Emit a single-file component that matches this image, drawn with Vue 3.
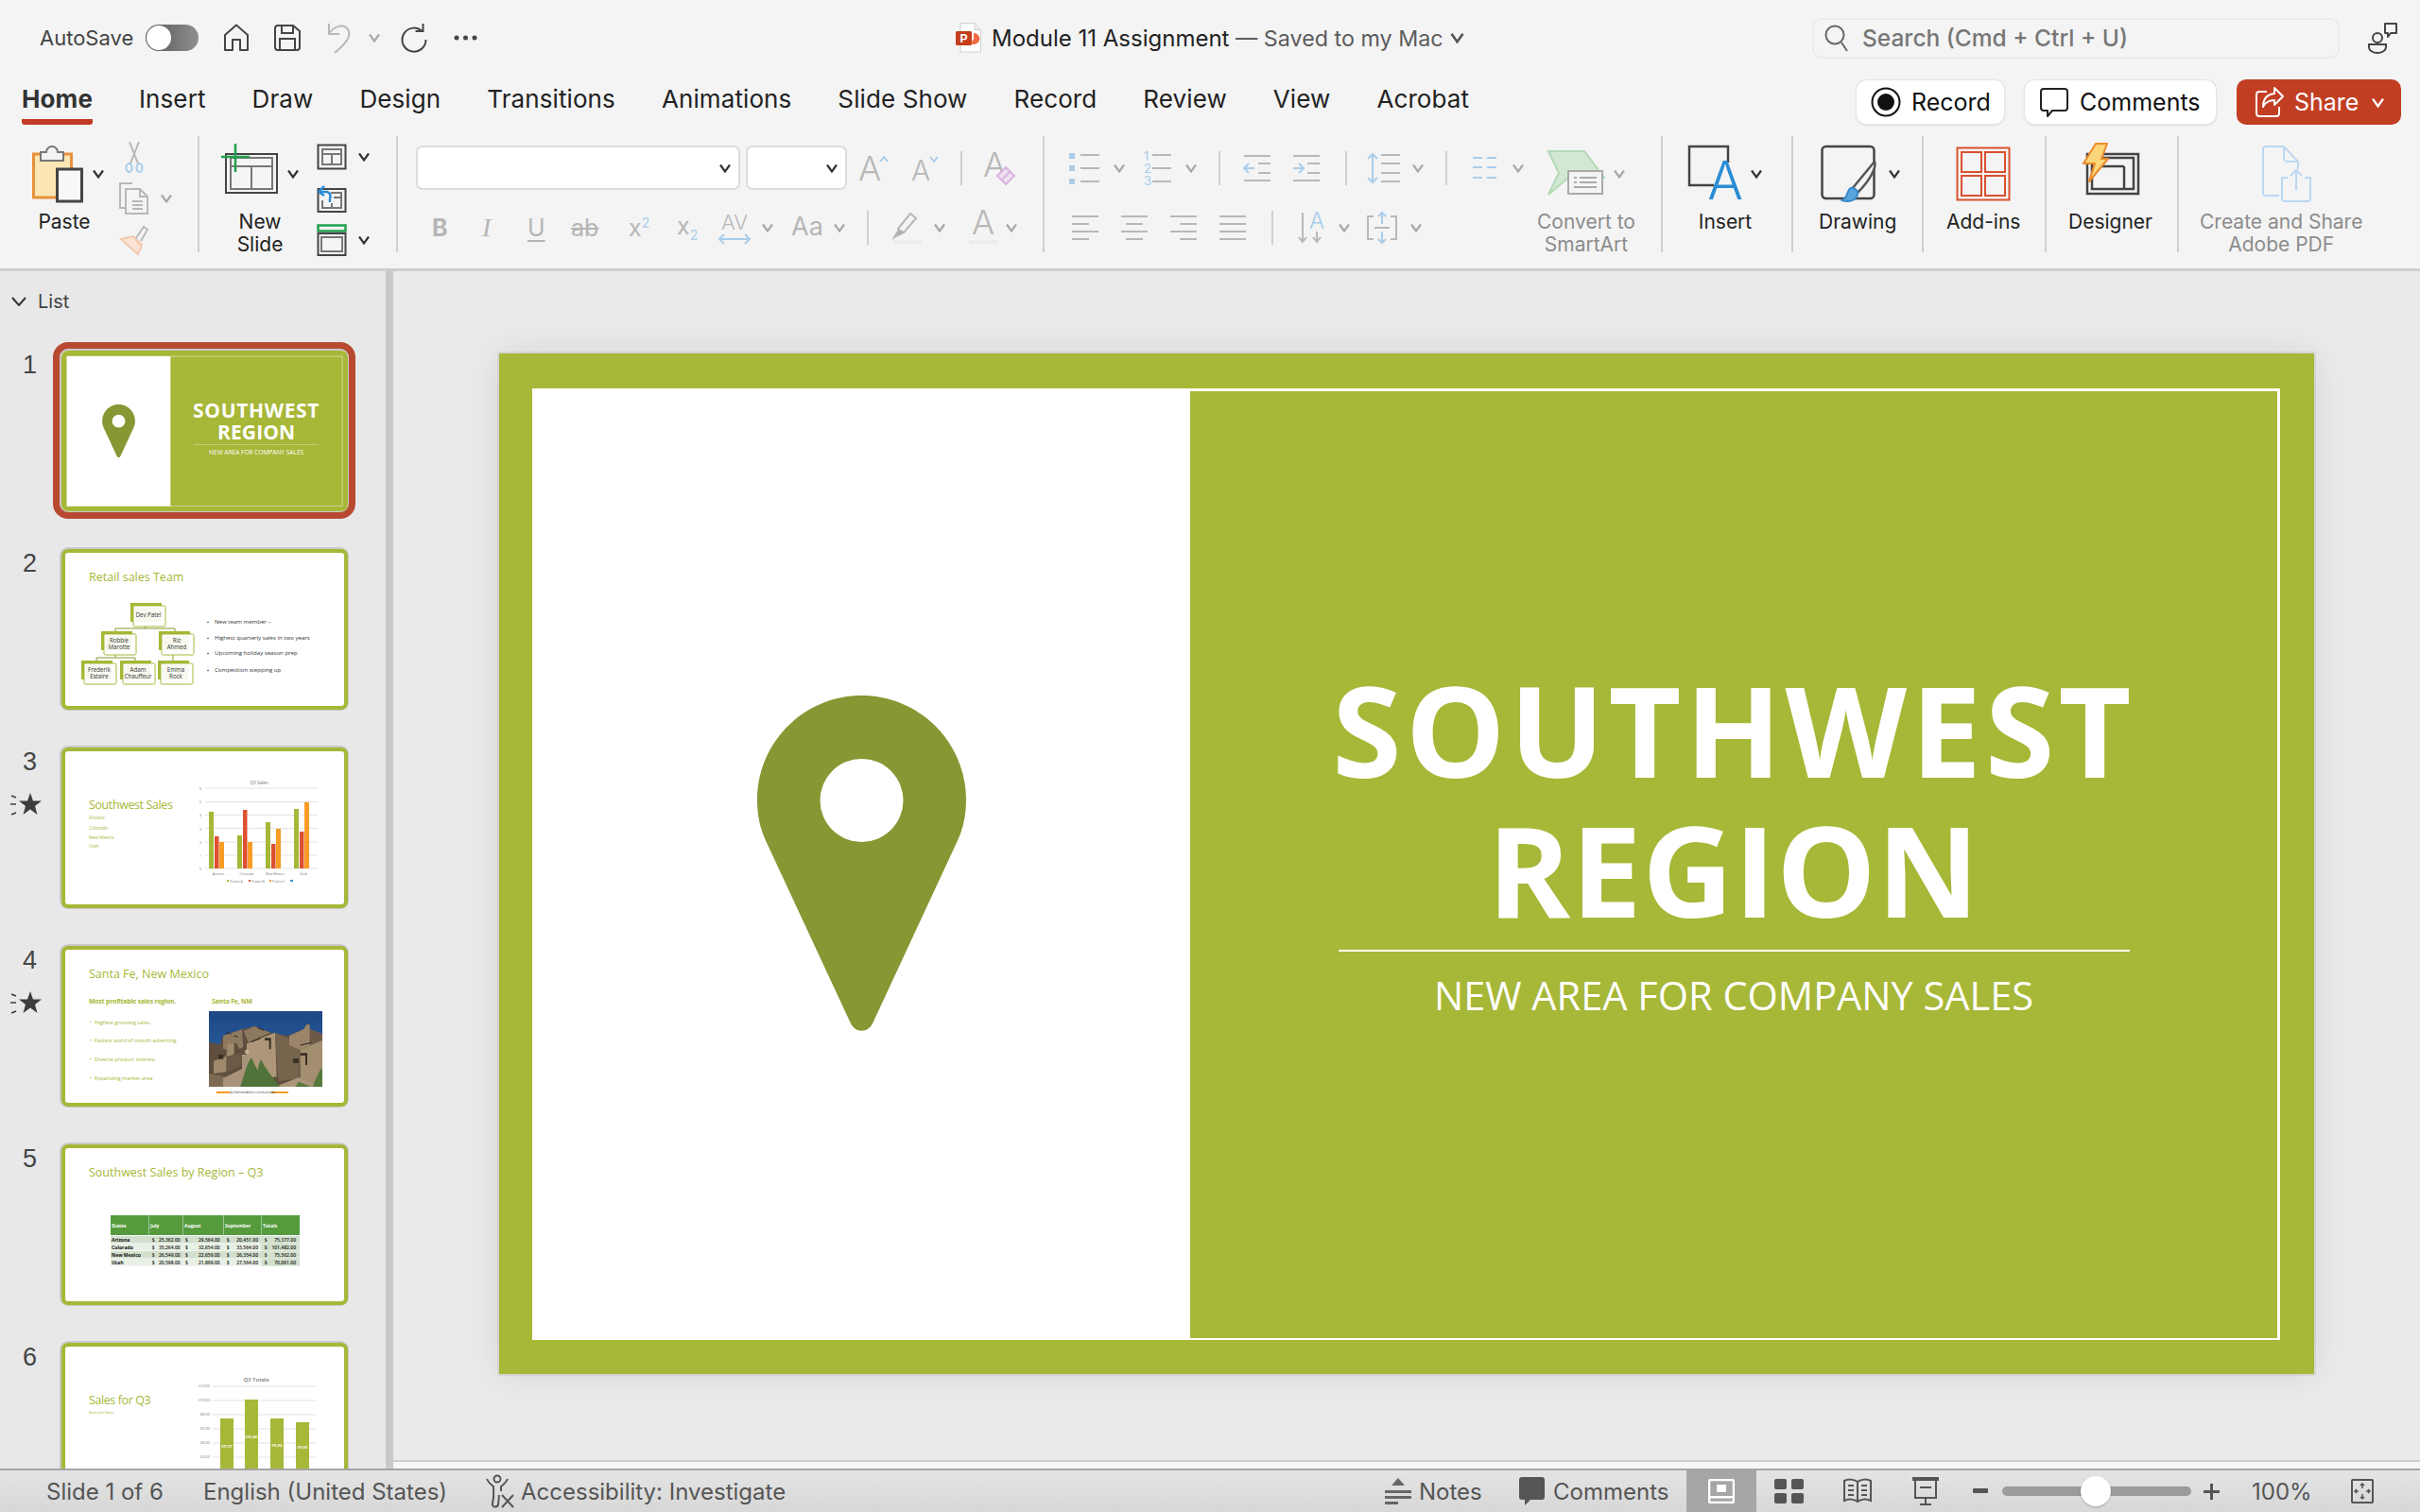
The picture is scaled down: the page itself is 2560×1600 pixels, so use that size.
<template>
  <div class="app">
    <!-- shared little chevron -->
    <svg width="0" height="0" class="defs">
      <symbol id="caret" viewBox="0 0 12 10"><path d="M1 1.5 6 8.5 11 1.5" fill="none" stroke="currentColor" stroke-width="2.2" /></symbol>
    </svg>

    <header class="titlebar">
      <div class="tb-left">
        <span class="autosave">AutoSave</span>
        <span class="toggle"><i></i></span>
        <svg class="ic home" width="28" height="30" viewBox="0 0 28 30"><path d="M2 28V12L14 1.500 26 12V28h-8V17h-8v11z" stroke-linejoin="round" /></svg>
        <svg class="ic save" width="28" height="28" viewBox="0 0 28 28"><path d="M4 1h16l7 6v17a3 3 0 0 1-3 3H4a3 3 0 0 1-3-3V4a3 3 0 0 1 3-3z" /><path d="M8 1v8h12V1M6 27V15h16v12" /></svg>
        <svg class="ic off undo" width="27" height="34" viewBox="0 0 27 34"><path d="M3 2v11h11M3 13C8 4 19 2 23 8c4 7-1 14-14 25" /></svg>
        <svg class="caret off c-undo"><use href="#caret" /></svg>
        <svg class="ic redo" width="28" height="30" viewBox="0 0 28 30"><path d="M22 7.500A12.500 12.500 0 1 0 26.500 17M23.500 0v8h-8" /></svg>
        <svg class="dots" width="25" height="6" viewBox="0 0 25 6"><circle cx="3" cy="3" r="2.500" /><circle cx="12.500" cy="3" r="2.500" /><circle cx="22" cy="3" r="2.500" /></svg>
      </div>
      <div class="tb-title">
        <svg class="ppt" width="27" height="32" viewBox="0 0 27 32">
          <path d="M5 .5h15l6.500 7V31H5z" fill="#fff" stroke="#cfcfcf" />
          <path d="M20 .5v7h6.500" fill="#eee" stroke="#cfcfcf" />
          <rect x="0" y="9" width="17" height="15" rx="1.500" fill="#c43e1c" />
          <text x="8.500" y="21" class="ppt-p">P</text>
          <path d="M19 11a6 6 0 1 1-3 11l3-5z" fill="#ee6a42" />
        </svg>
        <span class="doc">Module 11 Assignment</span>
        <span class="saved"> — Saved to my Mac</span>
        <svg class="caret c-title"><use href="#caret" /></svg>
      </div>
      <div class="search">
        <svg class="ic s-666" width="26" height="30" viewBox="0 0 26 30"><circle cx="11" cy="12" r="9.500" /><path d="M18 20l6 9" /></svg>
        <span>Search (Cmd + Ctrl + U)</span>
      </div>
      <svg class="ic people" width="32" height="34" viewBox="0 0 32 34">
        <circle cx="10" cy="17" r="5" /><path d="M1 24h18v3a9 6 0 0 1-18 0z" />
        <path d="M18 2h12v10h-6l-3 4v-4h-3z" stroke-linejoin="round" />
      </svg>
    </header>

    <nav class="tabbar">
      <div v-for="t in tabs" :key="t" class="tab" :class="{ active: t === 'Home' }">{{ t }}</div>
      <div class="actions">
        <button class="btn">
          <svg width="32" height="32" viewBox="0 0 32 32"><circle cx="16" cy="16" r="14.500" fill="none" stroke="#111" stroke-width="2" /><circle cx="16" cy="16" r="9" fill="#111" /></svg>
          Record
        </button>
        <button class="btn btn-c">
          <svg class="ic s-dark" width="32" height="32" viewBox="0 0 32 32"><path d="M5 2h22a3 3 0 0 1 3 3v17a3 3 0 0 1-3 3H14l-5 6v-6H5a3 3 0 0 1-3-3V5a3 3 0 0 1 3-3z" stroke-linejoin="round" /></svg>
          Comments
        </button>
        <button class="share">
          <svg class="ic s-white" width="30" height="32" viewBox="0 0 30 32"><path d="M12 5H4a3 3 0 0 0-3 3v20a3 3 0 0 0 3 3h18a3 3 0 0 0 3-3v-7" /><path d="M20 1l9 9-9 9v-5c-7 0-10 3-12 7 0-8 4-13 12-14z" stroke-linejoin="round" /></svg>
          Share
          <svg class="caret c-share"><use href="#caret" /></svg>
        </button>
      </div>
    </nav>

    <section class="ribbon">
      <div class="grp g-paste">
        <div class="big">
          <div class="big-ic">
            <svg class="ic" width="54" height="64" viewBox="0 0 54 64">
              <rect x="1.500" y="11" width="40" height="46" fill="#fbe6b4" stroke="#e8913a" stroke-width="3" />
              <path d="M9 18V9h6a6 6 0 0 1 12 0h6v9z" fill="#f4f4f4" stroke="#777" />
              <rect x="26.500" y="27" width="26" height="34" fill="#f8f8f8" stroke="#444" stroke-width="3" />
            </svg>
            <svg class="caret"><use href="#caret" /></svg>
          </div>
          <div class="lbl l-paste">Paste</div>
        </div>
        <div class="smalls">
          <div class="sm">
            <svg class="ic off" width="32" height="34" viewBox="0 0 32 34"><path d="M11 1l9 23M21 1l-9 23" /><g stroke="#a9cdea"><ellipse cx="10.500" cy="28.500" rx="3" ry="4.500" /><ellipse cx="21.500" cy="28.500" rx="3" ry="4.500" /></g></svg>
          </div>
          <div class="sm">
            <svg class="ic off" width="32" height="34" viewBox="0 0 32 34"><path d="M14 1H1v26h6M7 7h15l8 8v18H7zM22 7v8h8M14 20h11M14 24h11M14 28h11" /></svg>
            <svg class="caret off"><use href="#caret" /></svg>
          </div>
          <div class="sm">
            <svg class="ic s-peach" width="32" height="34" viewBox="0 0 32 34"><path d="M2 16l13-3 9 9-4 10zM15 13l7 9" fill="#fae3d4" /><path d="M18 15l8-12 4 3-7 12" stroke="#bbb" /></svg>
          </div>
        </div>
      </div>

      <div class="grp g-slides">
        <div class="big">
          <div class="big-ic">
            <svg class="ic" width="60" height="64" viewBox="0 0 60 64">
              <rect x="5" y="11" width="54" height="41" />
              <path d="M10 15h44v33H10zM10 24h44M32 24v24" stroke="#777" />
              <path d="M15 0v30M0 14h30" stroke="#22a04e" stroke-width="2.500" />
            </svg>
            <svg class="caret"><use href="#caret" /></svg>
          </div>
          <div class="lbl">New<br />Slide</div>
        </div>
        <div class="smalls s2">
          <div class="sm">
            <svg class="ic" width="32" height="28" viewBox="0 0 32 28"><rect x="1.500" y="1.500" width="29" height="25" /><path d="M6 6h20v16H6zM6 11h20M16 11v11" stroke="#777" /></svg>
            <svg class="caret"><use href="#caret" /></svg>
          </div>
          <div class="sm">
            <svg class="ic" width="32" height="30" viewBox="0 0 32 30"><rect x="1.500" y="5" width="29" height="24" /><path d="M15 9h11v16H6v-8M18 14h8M16 20v5" stroke="#777" /><path d="M2 8l6-6M2 8l6 4M3 8h8a5 5 0 0 1 3 7v4" stroke="#2a8dd4" stroke-width="2.500" /></svg>
          </div>
          <div class="sm">
            <svg class="ic" width="32" height="34" viewBox="0 0 32 34"><rect x="1.500" y="1.500" width="29" height="6" stroke="#22a04e" stroke-width="2.500" /><rect x="1.500" y="10" width="29" height="23" /><rect x="5" y="14" width="22" height="15" stroke="#777" /></svg>
            <svg class="caret"><use href="#caret" /></svg>
          </div>
        </div>
      </div>

      <div class="grp g-font">
        <div class="rows">
          <div class="row r-font1">
            <div class="field f-name"><svg class="caret"><use href="#caret" /></svg></div>
            <div class="field f-size"><svg class="caret"><use href="#caret" /></svg></div>
            <svg class="ic off" width="32" height="30" viewBox="0 0 32 30"><text x="11" y="28" class="gl-a">A</text><path d="M22 8l4-5 4 5" stroke="#a9cdea" /></svg>
            <svg class="ic off" width="30" height="30" viewBox="0 0 30 30"><text x="9" y="28" class="gl-a2">A</text><path d="M19 3l4 5 4-5" stroke="#a9cdea" /></svg>
            <i class="vsep"></i>
            <svg class="ic s-pink" width="34" height="38" viewBox="0 0 34 38"><text x="10" y="28" class="gl-a">A</text><path d="M13 27l9-9 9 9-9 9z" fill="#efdff1" /><path d="M17.500 31.500l9-9" /></svg>
          </div>
          <div class="row r-font2">
            <span class="gl g-b">B</span>
            <span class="gl g-i">I</span>
            <span class="gl g-u">U</span>
            <span class="gl g-s">ab</span>
            <span class="gl g-x">x<sup>2</sup></span>
            <span class="gl g-x">x<sub>2</sub></span>
            <svg class="ic s-blue" width="34" height="36" viewBox="0 0 34 36"><text x="17" y="20" class="gl-av">AV</text><path d="M1 30h32M6 25l-5 5 5 5M28 25l5 5-5 5" /></svg>
            <svg class="caret off"><use href="#caret" /></svg>
            <span class="gl g-aa">Aa</span>
            <svg class="caret off"><use href="#caret" /></svg>
            <i class="vsep tall"></i>
            <svg class="ic off" width="30" height="34" viewBox="0 0 30 34"><path d="M5 18L18 2l6 5L11 22l-5 1z" /><path d="M1 27l5-8 5 3z" fill="#aaa" /><path d="M0 32h30" stroke="#ececec" stroke-width="4" /></svg>
            <svg class="caret off"><use href="#caret" /></svg>
            <svg class="ic off" width="30" height="34" viewBox="0 0 30 34"><text x="15" y="24" class="gl-a">A</text><path d="M0 32h30" stroke="#ececec" stroke-width="4" /></svg>
            <svg class="caret off"><use href="#caret" /></svg>
          </div>
        </div>
      </div>

      <div class="grp g-para">
        <div class="rows para-rows">
          <div class="row r-para1">
            <svg class="ic off" width="32" height="32" viewBox="0 0 32 32"><path d="M12 2h20M12 16h20M12 30h20" /><path d="M0 0h6v6H0zM0 13h6v6H0zM0 27h6v6H0z" fill="#a9cdea" stroke="none" /></svg>
            <svg class="caret off"><use href="#caret" /></svg>
            <svg class="ic off" width="32" height="36" viewBox="0 0 32 36"><text x="3" y="10" class="gl-n">1</text><text x="3" y="23" class="gl-n">2</text><text x="3" y="36" class="gl-n">3</text><path d="M12 4h20M12 18h20M12 32h20" /></svg>
            <svg class="caret off"><use href="#caret" /></svg>
            <i class="vsep"></i>
            <svg class="ic off" width="30" height="30" viewBox="0 0 30 30"><path d="M1 2h28M16 10h13M16 20h13M1 28h28" /><path d="M12 15H2M6 10l-5 5 5 5" stroke="#a9cdea" /></svg>
            <svg class="ic off" width="30" height="30" viewBox="0 0 30 30"><path d="M1 2h28M16 10h13M16 20h13M1 28h28" /><path d="M1 15h10M7 10l5 5-5 5" stroke="#a9cdea" /></svg>
            <i class="vsep"></i>
            <svg class="ic off" width="34" height="34" viewBox="0 0 34 34"><path d="M14 3h20M14 12h20M14 22h20M14 31h20" /><path d="M5 2v30M0 7l5-5 5 5M0 27l5 5 5-5" stroke="#a9cdea" /></svg>
            <svg class="caret off"><use href="#caret" /></svg>
            <i class="vsep"></i>
            <svg class="ic s-blue" width="26" height="26" viewBox="0 0 26 26"><path d="M0 2h10M0 12h10M0 23h10M15 2h10M15 12h10M15 23h10" /></svg>
            <svg class="caret off"><use href="#caret" /></svg>
          </div>
          <div class="row r-para2">
            <svg class="ic off" width="28" height="28" viewBox="0 0 28 28"><path d="M0 2h28M0 10h18M0 18h28M0 26h18" /></svg>
            <svg class="ic off" width="28" height="28" viewBox="0 0 28 28"><path d="M0 2h28M5 10h18M0 18h28M5 26h18" /></svg>
            <svg class="ic off" width="28" height="28" viewBox="0 0 28 28"><path d="M0 2h28M10 10h18M0 18h28M10 26h18" /></svg>
            <svg class="ic off" width="28" height="28" viewBox="0 0 28 28"><path d="M0 2h28M0 10h28M0 18h28M0 26h28" /></svg>
            <i class="vsep tall"></i>
            <svg class="ic off" width="28" height="34" viewBox="0 0 28 34"><text x="20" y="18" class="gl-dir">A</text><path d="M5 1v31M1 27l4 5 4-5M20 21v11M16 27l4 5 4-5" /></svg>
            <svg class="caret off"><use href="#caret" /></svg>
            <svg class="ic off" width="32" height="34" viewBox="0 0 32 34"><path d="M7 5H1v24h6M25 5h6v24h-6M8 17h16" /><path d="M16 1v12M12 5l4-4 4 4M16 21v12M12 29l4 4 4-4" stroke="#a9cdea" /></svg>
            <svg class="caret off"><use href="#caret" /></svg>
          </div>
        </div>
        <div class="big">
          <div class="big-ic">
            <svg class="ic" width="60" height="64" viewBox="0 0 60 64">
              <path d="M1 8h38l21 28H22l-21 18 11-23z" fill="#d3e8d4" stroke="#b3d9b7" />
              <rect x="22" y="29" width="36" height="24" fill="#f4f4f4" stroke="#aaa" />
              <path d="M28 36h3M34 36h18M28 41h3M34 41h18M28 46h24" stroke="#aaa" />
            </svg>
            <svg class="caret off"><use href="#caret" /></svg>
          </div>
          <div class="lbl dim">Convert to<br />SmartArt</div>
        </div>
      </div>

      <div class="grp g-insert">
        <div class="big">
          <div class="big-ic">
            <svg class="ic" width="56" height="64" viewBox="0 0 56 64">
              <path d="M42 20V3H1v41h26" stroke-width="2.500" />
              <text x="39" y="59" class="gl-big">A</text>
            </svg>
            <svg class="caret"><use href="#caret" /></svg>
          </div>
          <div class="lbl">Insert</div>
        </div>
      </div>

      <div class="grp g-draw">
        <div class="big">
          <div class="big-ic">
            <svg class="ic" width="62" height="64" viewBox="0 0 62 64">
              <rect x="1.500" y="3" width="55" height="55" rx="4" stroke-width="2.500" />
              <path d="M33 48l24-29c2 4-2 17-18 33z" fill="#f4f4f4" stroke="#555" stroke-width="2.500" />
              <path d="M23 60c6 2 14 1 16-6 1-4-3-8-7-7-4 1-3 10-9 13z" fill="#58a4dc" stroke="#3b8ac8" />
            </svg>
            <svg class="caret"><use href="#caret" /></svg>
          </div>
          <div class="lbl l-draw">Drawing</div>
        </div>
      </div>

      <div class="grp g-addin">
        <div class="big">
          <div class="big-ic">
            <svg class="ic s-red" width="58" height="58" viewBox="0 0 58 58">
              <rect x="1.500" y="1.500" width="55" height="55" />
              <path d="M6 6h21v21H6zM31 6h21v21H31zM6 31h21v21H6zM31 31h21v21H31z" />
            </svg>
          </div>
          <div class="lbl">Add-ins</div>
        </div>
      </div>

      <div class="grp g-design">
        <div class="big">
          <div class="big-ic">
            <svg class="ic" width="60" height="64" viewBox="0 0 60 64">
              <rect x="5" y="11" width="54" height="42" stroke-width="2.500" />
              <path d="M10 15h44v33H10zM10 24h34M44 24v24" stroke-width="2.500" />
              <path d="M14 0h12l-6 16h7L7 40l6-19H1z" fill="#fbd67b" stroke="#ed8a2a" stroke-linejoin="round" />
            </svg>
          </div>
          <div class="lbl">Designer</div>
        </div>
      </div>

      <div class="grp g-pdf">
        <div class="big">
          <div class="big-ic">
            <svg class="ic s-pdf pdf-ic" width="52" height="60" viewBox="0 0 52 60">
              <path d="M18 53H4a3 3 0 0 1-3-3V4a3 3 0 0 1 3-3h19l15 16v8" />
              <path d="M23 1v12a4 4 0 0 0 4 4h11" />
              <path d="M27 34h-6v22a3 3 0 0 0 3 3h24a3 3 0 0 0 3-3V34h-6M36 47V27M30 32l6-6 6 6" />
            </svg>
          </div>
          <div class="lbl dim">Create and Share<br />Adobe PDF</div>
        </div>
      </div>
    </section>

    <div class="workspace">
      <aside class="panel">
        <div class="list-head">
          <svg width="16" height="10" viewBox="0 0 16 10"><path d="M1 1l7 8 7-8" fill="none" stroke="#333" stroke-width="2" /></svg>
          <span>List</span>
        </div>
        <div class="thumbs">
          <div v-for="n in 6" :key="n" class="thumb-row">
            <div class="num-col">
              <span class="num">{{ n }}</span>
              <svg v-if="n === 3 || n === 4" class="star" width="33" height="26" viewBox="0 0 33 26">
                <path d="M21 0l3 8.500h9l-7 5.500 2.500 9-7.500-5.500-7.500 5.500L16 14 9 8.500h9z" fill="#3d3d3d" />
                <path d="M1 3l5 2M0 12h6M1 23l5-2" stroke="#3d3d3d" stroke-width="1.600" />
              </svg>
            </div>
            <div class="thumb" :class="{ selected: n === 1 }">
              <div class="thumb-in">
                <!-- same slide markup as the editor, just scaled down -->
                <div v-if="n === 1" class="mini">
                  <div class="slide no-shadow">
                    <div class="frame">
                      <div class="pin-side">
                        <svg width="221" height="355" viewBox="0 0 221 355"><path d="M110.500 0C49.500 0 0 49.500 0 110.500c0 16 3 30 9 43L98 345c5 13 20 13 25 0l89-191.500c6-13 9-27 9-43C221 49.500 171.500 0 110.500 0z" fill="#859833" /><circle cx="110.500" cy="111" r="44" fill="#fff" /></svg>
                      </div>
                      <div class="title-side">
                        <h1><span class="l1">SOUTHWEST</span><br /><span class="l2">REGION</span></h1>
                        <i class="rule"></i>
                        <p>NEW AREA FOR COMPANY SALES</p>
                      </div>
                    </div>
                  </div>
                </div>

                <svg v-else-if="n === 2" class="tsvg" viewBox="0 0 296 161">
                  <text x="25" y="30" class="t-title">Retail sales Team</text>
                  <path d="M84.500 77v3M53 86v-6h63v6M33 117v-6h41v6M53 108v3M114 108v9" fill="none" stroke="#859833" />
                  <g v-for="b in orgBoxes" :key="b.x">
                    <rect :x="b.x - 3" :y="b.y - 3" width="33" height="20" fill="#a7b737" />
                    <rect :x="b.x" :y="b.y" width="34" height="22" rx="1.500" fill="#fff" stroke="#a7b737" />
                    <rect :x="b.x + 2" :y="b.y + 2" width="27" height="15" fill="#f7f8ee" />
                    <text v-if="b.lines.length === 1" :x="b.x + 16" :y="b.y + 11.500" class="t-node">{{ b.lines[0] }}</text>
                    <template v-else>
                      <text :x="b.x + 16" :y="b.y + 9" class="t-node">{{ b.lines[0] }}</text>
                      <text :x="b.x + 16" :y="b.y + 16" class="t-node">{{ b.lines[1] }}</text>
                    </template>
                  </g>
                  <g v-for="b in teamNotes" :key="b.t">
                    <circle cx="151" :cy="b.y - 1.500" r=".8" fill="#333" />
                    <text x="158" :y="b.y" class="t-note">{{ b.t }}</text>
                  </g>
                </svg>

                <svg v-else-if="n === 3" class="tsvg" viewBox="0 0 296 161">
                  <text x="25" y="61" class="t-title tight">Southwest Sales</text>
                  <text v-for="s in stateList" :key="s.t" x="25" :y="s.y" class="t-list">{{ s.t }}</text>
                  <text x="205" y="35" class="t-axis t-ch">Q3 Sales</text>
                  <path v-for="y in [39, 53.5, 67.5, 81.5, 96, 110, 124]" :key="y" :d="`M148 ${y}h119`" stroke="#e3e3e3" stroke-width="1.200" />
                  <text v-for="(v, i) in 7" :key="v" x="143" :y="41 + i * 14.200" class="t-axis">{{ 6 - i }}</text>
                  <rect v-for="b in salesBars" :key="b.x" :x="b.x" :y="b.y" :width="b.w" :height="124 - b.y" :fill="b.c" />
                  <text v-for="l in salesCats" :key="l.t" :x="l.x" y="131" class="t-axis">{{ l.t }}</text>
                  <g class="t-legend">
                    <rect x="171" y="136" width="2" height="2" fill="#a7b737" /><text x="174" y="139" class="t-leg">Product A</text>
                    <rect x="194" y="136" width="2" height="2" fill="#dd5030" /><text x="197" y="139" class="t-leg">Product B</text>
                    <rect x="216" y="136" width="2" height="2" fill="#f99c25" /><text x="219" y="139" class="t-leg">Product C</text>
                    <rect x="238" y="136" width="3" height="2" fill="#3d8fc4" />
                  </g>
                </svg>

                <svg v-else-if="n === 4" class="tsvg" viewBox="0 0 296 161">
                  <defs>
                    <linearGradient id="sky" x1="0" y1="0" x2="0" y2="1"><stop offset="0" stop-color="#1e4886" /><stop offset="1" stop-color="#2f66a6" /></linearGradient>
                  </defs>
                  <text x="25" y="30" class="t-title">Santa Fe, New Mexico</text>
                  <text x="25" y="57" class="t-sub">Most profitable sales region.</text>
                  <text x="155" y="57" class="t-sub">Santa Fe, NM</text>
                  <g v-for="b in santaFe" :key="b.t">
                    <text x="26" :y="b.y" class="t-bul">•</text>
                    <text x="31" :y="b.y" class="t-bul">{{ b.t }}</text>
                  </g>
                  <!-- photo of the adobe building, roughly -->
                  <g transform="translate(152 65) scale(.3333) translate(-15 -27)">
                    <rect x="15" y="27" width="360" height="240" fill="url(#sky)" />
                    <path d="M15 125l35 8 10-28 60-20 40-10 50 20 55 10 50-20 10-15h10v15l40 15v167H15z" fill="#5f4e3d" />
                    <path d="M60 105l60-20 4 55-12 8-10-20-20 3-8 20-14-4zM125 90l35-15 50 20-70 30z" fill="#8d7860" />
                    <path d="M135 130l90-35 5 140-25 5-70-50z" fill="#ad9679" />
                    <path d="M225 95l80 35-5 110-65 10z" fill="#77644d" />
                    <path d="M270 105l45-20 10-15h10v15l40 15v20l-70 30-35-15z" fill="#9a846a" />
                    <path d="M335 85l40 15v20l-40 15z" fill="#6b5946" />
                    <path d="M305 150l70-30v145l-70-25z" fill="#a48e70" />
                    <path d="M30 185l40-15 5-40 20 0 0 30-25 60-40 5z" fill="#a08a6c" />
                    <path d="M70 170l50-10-5 40-45 25z" fill="#6c5a47" />
                    <path d="M15 225l50 10-5 32H15z" fill="#7d6a53" />
                    <path d="M60 240l60-30v-45h30v102H60z" fill="#a8927a" />
                    <path d="M225 267l75-30 75 28v2z" fill="#ab9578" />
                    <path d="M192 112h20v36h-6v-28h-14zM305 160h22v38h-6v-30h-16zM282 178h18v14h-18zM45 165h16v14H45z" fill="#3a2f24" />
                    <path d="M70 95l15 4M95 105l12 4M170 80l20 8M305 135l35-8M150 125l30-12" stroke="#2e251b" stroke-width="3" />
                    <path d="M115 267c8-22 18-70 35-92 6 12 12 28 20 40 2-14 6-28 10-35 10 22 30 48 60 87z" fill="#4f7338" />
                    <path d="M345 267c6-20 18-48 30-62v62zM290 267l10-16 40 16z" fill="#56783d" />
                    <path d="M130 150h12v12h-12z" fill="#c9b58f" />
                  </g>
                  <rect x="160" y="150" width="14" height="2" fill="#f99c25" />
                  <rect x="218" y="150" width="18" height="2" fill="#f99c25" />
                  <text x="174" y="152" class="t-cap">by Unknown Author is licensed under</text>
                </svg>

                <svg v-else-if="n === 5" class="tsvg" viewBox="0 0 296 161">
                  <text x="25" y="30" class="t-title">Southwest Sales by Region – Q3</text>
                  <rect x="48" y="71" width="200" height="21" fill="#559b3e" />
                  <path d="M88.500 71v21M124.500 71v21M167.500 71v21M207.500 71v21" stroke="#9cc48f" />
                  <text v-for="h in tblHead" :key="h.t" :x="h.x" y="84" class="t-th">{{ h.t }}</text>
                  <g v-for="(r, i) in tblRows" :key="r.name">
                    <rect x="48" :y="93 + i * 8" width="200" height="7.500" :fill="i === 0 || i === 2 ? '#d2e0cd' : '#e8f0e5'" />
                    <rect x="207.500" :y="93 + i * 8" width="40.500" height="7.500" fill="#d2e0cd" />
                    <text x="49" :y="99 + i * 8" class="t-tb">{{ r.name }}</text>
                    <g v-for="(c, j) in r.vals" :key="j">
                      <text :x="cols[j].a" :y="99 + i * 8" class="t-td">$</text>
                      <text :x="cols[j].b" :y="99 + i * 8" class="t-td t-end">{{ c }}</text>
                    </g>
                  </g>
                </svg>

                <svg v-else class="tsvg" viewBox="0 0 296 161">
                  <text x="25" y="61" class="t-title tight">Sales for Q3</text>
                  <text x="25" y="71" class="t-list small">Sales per State</text>
                  <text x="202" y="37" class="t-axis t-ch2">Q3 Totals</text>
                  <path v-for="y in [42, 57, 72, 87, 102, 117, 132]" :key="y" :d="`M156 ${y}h109`" stroke="#e3e3e3" stroke-width="1.200" />
                  <text v-for="(y, i) in [42, 57, 72, 87, 102, 117]" :key="y" x="153" :y="y + 1" class="t-yl">${{ 120 - i * 20 }},000</text>
                  <rect v-for="b in totalBars" :key="b.x" :x="b.x" :y="b.y" width="14" :height="161 - b.y" fill="#a7b737" />
                  <text v-for="b in totalBars" :key="b.l" :x="b.x + 7" :y="b.ly" class="t-bar">{{ b.l }}</text>
                </svg>
              </div>
            </div>
          </div>
        </div>
      </aside>

      <main class="stage">
        <div class="slide-wrap">
          <div class="slide">
            <div class="frame">
              <div class="pin-side">
                <svg width="221" height="355" viewBox="0 0 221 355"><path d="M110.500 0C49.500 0 0 49.500 0 110.500c0 16 3 30 9 43L98 345c5 13 20 13 25 0l89-191.500c6-13 9-27 9-43C221 49.500 171.500 0 110.500 0z" fill="#859833" /><circle cx="110.500" cy="111" r="44" fill="#fff" /></svg>
              </div>
              <div class="title-side">
                <h1><span class="l1">SOUTHWEST</span><br /><span class="l2">REGION</span></h1>
                <i class="rule"></i>
                <p>NEW AREA FOR COMPANY SALES</p>
              </div>
            </div>
          </div>
        </div>
        <div class="hscroll"></div>
      </main>
    </div>

    <footer class="status">
      <span class="st-slide">Slide 1 of 6</span>
      <span class="st-lang">English (United States)</span>
      <svg class="ic s-555 st-acc" width="32" height="36" viewBox="0 0 32 36">
        <circle cx="13" cy="5" r="3.500" />
        <path d="M2 5c2 5 6 7 7 8 0 6 1 10-1 18-1 4 5 5 6 1l1-10M24 5c-2 5-6 7-7 8v5M18 22l12 13M30 22L18 35" />
      </svg>
      <span class="st-a11y">Accessibility: Investigate</span>
      <svg class="st-notes" width="28" height="28" viewBox="0 0 28 28" fill="#666"><path d="M14 0l7 8H7z" /><path d="M0 13h28v3H0zM0 19h28v3H0zM0 25h14v3H0z" /></svg>
      <span class="st-n">Notes</span>
      <svg class="st-cm" width="27" height="30" viewBox="0 0 27 30" fill="#555"><path d="M3 0h21a3 3 0 0 1 3 3v18a3 3 0 0 1-3 3H12l-6 6 0-6H3a3 3 0 0 1-3-3V3a3 3 0 0 1 3-3z" /></svg>
      <span class="st-c">Comments</span>
      <div class="view-on">
        <svg width="28" height="26" viewBox="0 0 28 26"><rect x="1" y="1" width="26" height="24" rx="2" fill="none" stroke="#fff" stroke-width="2.500" /><rect x="9" y="6" width="10" height="8" fill="#fff" /><rect x="1" y="18" width="26" height="2.500" fill="#fff" /></svg>
      </div>
      <svg class="st-grid" width="31" height="26" viewBox="0 0 31 26" fill="#555"><rect width="13" height="11" rx="2" /><rect x="18" width="13" height="11" rx="2" /><rect y="15" width="13" height="11" rx="2" /><rect x="18" y="15" width="13" height="11" rx="2" /></svg>
      <svg class="ic s-555 st-book" width="30" height="28" viewBox="0 0 30 28"><path d="M15 4C11 1 5 1 1 3v21c4-2 10-2 14 1 4-3 10-3 14-1V3c-4-2-10-2-14 1zM15 4v21M5 8h6M5 13h6M5 18h6M19 8h6M19 13h6M19 18h6" /></svg>
      <svg class="ic s-555 st-show" width="30" height="30" viewBox="0 0 30 30"><path d="M1 2h28" stroke-width="4" /><path d="M4 4v18h22V4M9 11h12M15 22v7M9 29h12" /></svg>
      <svg class="st-minus" width="16" height="6" viewBox="0 0 16 6" fill="#555"><rect width="16" height="5" rx="1" /></svg>
      <div class="slider"><i class="knob"></i></div>
      <svg class="st-plus" width="17" height="17" viewBox="0 0 17 17" fill="#555"><path d="M7 0h3v7h7v3h-7v7H7v-7H0V7h7z" /></svg>
      <span class="st-zoom">100%</span>
      <svg class="ic s-555 st-fit" width="24" height="26" viewBox="0 0 24 26"><rect x="1" y="1" width="22" height="24" rx="1" /><path d="M12 5v5M10 7l2-2 2 2M12 21v-5M10 19l2 2 2-2M4 13h4M6 11l-2 2 2 2M20 13h-4M18 11l2 2-2 2" stroke-width="1.500" /></svg>
    </footer>
  </div>
</template>

<script setup>
const tabs = ["Home", "Insert", "Draw", "Design", "Transitions", "Animations", "Slide Show", "Record", "Review", "View", "Acrobat"];

// thumbnail 2
const orgBoxes = [
  { x: 72, y: 56, lines: ["Dev Patel"] },
  { x: 41, y: 86, lines: ["Robbie", "Marotte"] },
  { x: 102, y: 86, lines: ["Riz", "Ahmed"] },
  { x: 20, y: 117, lines: ["Frederik", "Estaire"] },
  { x: 61, y: 117, lines: ["Adam", "Chauffeur"] },
  { x: 101, y: 117, lines: ["Emma", "Rock"] },
];
const teamNotes = [
  { t: "New team member –", y: 75 },
  { t: "Highest quarterly sales in two years", y: 92 },
  { t: "Upcoming holiday season prep", y: 108 },
  { t: "Competition stepping up", y: 126 },
];

// thumbnail 3
const stateList = [
  { t: "Arizona", y: 72 },
  { t: "Colorado", y: 83 },
  { t: "New Mexico", y: 93 },
  { t: "Utah", y: 102 },
];
const salesTops = [[64, 90, 96], [89, 62, 96], [75, 98, 82], [61, 85, 54]];
const barColors = ["#a7b737", "#dd5030", "#f99c25"];
const salesBars = salesTops.flatMap((g, i) =>
  g.map((y, j) => ({ x: 152 + i * 30 + [0, 6, 11][j], y, w: j === 1 ? 4.5 : 5, c: barColors[j] }))
);
const salesCats = [
  { t: "Arizona", x: 162 },
  { t: "Colorado", x: 192 },
  { t: "New Mexico", x: 222 },
  { t: "Utah", x: 252 },
];

// thumbnail 4
const santaFe = [
  { t: "Highest grossing sales.", y: 79 },
  { t: "Fastest word of mouth adverting.", y: 98 },
  { t: "Diverse product interest", y: 118 },
  { t: "Expanding market area", y: 138 },
];

// thumbnail 5
const tblHead = [
  { t: "States", x: 49 },
  { t: "July", x: 90 },
  { t: "August", x: 126 },
  { t: "September", x: 169 },
  { t: "Totals", x: 209 },
];
const cols = [
  { a: 91.7, b: 121.7 },
  { a: 127, b: 163.7 },
  { a: 170.7, b: 204 },
  { a: 210.7, b: 244 },
];
const tblRows = [
  { name: "Arizona", vals: ["25,362.00", "29,564.00", "20,451.00", "75,377.00"] },
  { name: "Colorado", vals: ["35,264.00", "32,654.00", "33,564.00", "101,482.00"] },
  { name: "New Mexico", vals: ["26,549.00", "22,659.00", "26,354.00", "75,562.00"] },
  { name: "Utah", vals: ["20,598.00", "21,899.00", "27,564.00", "70,061.00"] },
];

// thumbnail 6
const totalBars = [
  { x: 164, y: 76, l: "$75,377", ly: 107 },
  { x: 190, y: 56, l: "$101,482", ly: 97 },
  { x: 217, y: 76, l: "$75,562", ly: 106 },
  { x: 244, y: 80, l: "$70,061", ly: 108 },
];
</script>

<style scoped>
.app {
  width: 2560px;
  height: 1600px;
  overflow: hidden;
  background: #f4f4f4;
  color: #222;
  font-family: Inter, "Liberation Sans", sans-serif;
  display: flex;
  flex-direction: column;
}
.defs {
  position: absolute;
}

.ic {
  fill: none;
  stroke: #444;
  stroke-width: 2;
  flex: none;
  overflow: visible;
}
.ic.off {
  stroke: #b8b8b8;
}
.ic.s-666 {
  stroke: #666;
}
.ic.s-555 {
  stroke: #555;
}
.ic.s-dark {
  stroke: #222;
}
.ic.s-white {
  stroke: #fff;
}
.ic.s-peach {
  stroke: #f2c9ae;
}
.ic.s-pink {
  stroke: #d9b5de;
}
.ic.s-blue {
  stroke: #a9cdea;
}
.ic.s-red {
  stroke: #d9502f;
}
.ic.s-pdf {
  stroke: #bcd7f2;
}
.ic text {
  stroke: none;
}
.caret {
  width: 12px;
  height: 10px;
  flex: none;
  color: #333;
}
.caret.off {
  color: #a8a8a8;
}

/* title bar */
.titlebar {
  height: 80px;
  flex: none;
  display: flex;
  align-items: center;
}
.tb-left {
  width: 1011px;
  padding-left: 42px;
  box-sizing: border-box;
  display: flex;
  align-items: center;
  flex: none;
}
.autosave {
  font-size: 22px;
  color: #444;
  width: 112px;
}
.toggle {
  width: 56px;
  height: 28px;
  border-radius: 14px;
  background: linear-gradient(90deg, #555, #8f8f8f);
  display: flex;
  align-items: center;
  padding-left: 1px;
  box-sizing: border-box;
}
.toggle i {
  width: 26px;
  height: 26px;
  border-radius: 50%;
  background: #fff;
}
.home {
  margin-left: 26px;
}
.save {
  margin-left: 26px;
}
.undo {
  margin-left: 27px;
}
.c-undo {
  margin-left: 18px;
}
.redo {
  margin-left: 22px;
}
.dots {
  margin-left: 28px;
  fill: #444;
}
.tb-title {
  width: 906px;
  flex: none;
  display: flex;
  align-items: center;
  font-size: 24px;
  white-space: pre;
}
.ppt-p {
  font: 700 12px "Liberation Sans", sans-serif;
  fill: #fff;
  text-anchor: middle;
}
.doc {
  margin-left: 11px;
  color: #222;
}
.saved {
  color: #5c5c5c;
  font-size: 23.300px;
}
.c-title {
  margin-left: 6px;
  width: 17px;
  height: 12px;
  color: #555;
}
.search {
  width: 558px;
  height: 43px;
  box-sizing: border-box;
  border: 2px solid #ebebeb;
  border-radius: 10px;
  display: flex;
  align-items: center;
  padding-left: 11px;
  gap: 14px;
  font-size: 24.500px;
  font-weight: 500;
  color: #777;
  flex: none;
}
.people {
  margin-left: 30px;
}

/* tabs */
.tabbar {
  height: 55px;
  flex: none;
  display: flex;
  align-items: flex-start;
  padding-left: 23px;
  gap: 49px;
  font-size: 26px;
  position: relative;
}
.tab {
  height: 52px;
  line-height: 50px;
  color: #222;
  letter-spacing: 0.1px;
}
.tab.active {
  font-weight: 700;
  color: #333;
  border-bottom: 6px solid #c13c23;
  border-radius: 0 0 3px 3px;
  height: 52px;
  box-sizing: border-box;
  line-height: 50px;
}
.actions {
  margin-left: auto;
  padding: 5px 20px 0 0;
  display: flex;
  gap: 22px;
}
.btn,
.share {
  font: inherit;
  font-size: 25px;
  display: flex;
  align-items: center;
  gap: 11px;
  border: 0;
  padding: 0 0 0 15px;
  box-sizing: border-box;
  color: #111;
}
.btn {
  width: 156px;
  height: 46px;
  background: #fff;
  border-radius: 10px;
  box-shadow: 0 0 0 1px #e4e4e4, 0 1px 3px rgba(0, 0, 0, 0.18);
}
.btn-c {
  width: 202px;
}
.share {
  width: 174px;
  height: 48px;
  margin-top: -1px;
  background: #c23e23;
  color: #fff;
  border-radius: 10px;
  padding-left: 20px;
}
.c-share {
  color: #fff;
  width: 15px;
  height: 11px;
  margin-left: 2px;
}

/* ribbon */
.ribbon {
  height: 152px;
  box-sizing: border-box;
  flex: none;
  display: flex;
  padding-top: 9px;
  border-bottom: 3px solid #cdcdcd;
}
.grp {
  height: 123px;
  display: flex;
  flex: none;
  box-sizing: border-box;
  border-left: 2px solid #d0d0d0;
}
.g-paste {
  width: 209px;
  padding-left: 34px;
  border-left: 0;
}
.g-slides {
  width: 210px;
  padding-left: 23px;
}
.g-font {
  width: 684px;
  padding-left: 19px;
}
.g-para {
  width: 654px;
  padding-left: 26px;
}
.g-insert {
  width: 138px;
  padding-left: 27px;
}
.g-draw {
  width: 138px;
  padding-left: 27px;
}
.g-addin {
  width: 130px;
  padding-left: 24px;
}
.g-design {
  width: 140px;
  padding-left: 23px;
}
.g-pdf {
  flex: 1;
  padding-left: 22px;
}
.big {
  display: flex;
  flex-direction: column;
  align-items: center;
  flex: none;
}
.big-ic {
  height: 79px;
  flex: none;
  display: flex;
  align-items: center;
  gap: 10px;
}
.lbl {
  font-size: 21px;
  line-height: 24px;
  text-align: center;
  color: #222;
  white-space: nowrap;
}
.lbl.dim {
  color: #8c8c8c;
}
.l-paste {
  margin-right: 8px;
}
.l-draw {
  margin-right: 5px;
}
.pdf-ic {
  margin-left: 12px;
}
.smalls {
  display: grid;
  grid-auto-rows: 44px;
  margin-left: 16px;
}
.smalls.s2 {
  margin-left: 19px;
}
.sm {
  display: flex;
  align-items: center;
  gap: 12px;
}
.rows {
  display: flex;
  flex-direction: column;
  padding-top: 10px;
  gap: 16px;
}
.para-rows {
  width: 495px;
}
.row {
  display: grid;
  height: 47px;
  align-items: center;
  justify-items: start;
}
.r-font1 {
  grid-template-columns: 349px 120px 56px 51px 26px auto;
}
.r-font2 {
  margin-left: 17px;
  grid-template-columns: 53px 48px 46px 61px 51px 44px 46px 31px 45px 35px 28px 43px 37px 39px 12px;
}
.r-para1 {
  grid-template-columns: 47px 29px 47px 35px 26px 52px 56px 24px 47px 35px 29px 42px 12px;
}
.r-para2 {
  margin-left: 3px;
  grid-template-columns: 52px 52px 52px 55px 28px 43px 30px 46px 12px;
}
.field {
  height: 47px;
  box-sizing: border-box;
  background: #fff;
  border: 2px solid #dcdcdc;
  border-radius: 7px;
  display: flex;
  align-items: center;
  justify-content: flex-end;
  padding-right: 8px;
}
.f-name {
  width: 343px;
}
.f-size {
  width: 107px;
}
.vsep {
  width: 2px;
  height: 36px;
  background: #d0d0d0;
}
.vsep.tall {
  height: 36px;
}
.gl {
  color: #b5b5b5;
  line-height: 1.2;
  font-size: 25px;
}
.g-b {
  font-weight: 700;
}
.g-i {
  font-style: italic;
  font-family: "Liberation Serif", serif;
  font-size: 28px;
}
.g-u {
  text-decoration: underline;
  text-underline-offset: 4px;
}
.g-s {
  text-decoration: line-through;
}
.g-x sup,
.g-x sub {
  font-size: 14px;
  color: #a9cdea;
}
.g-aa {
  font-size: 27px;
}
.gl-a,
.gl-a2,
.gl-big,
.gl-av,
.gl-dir {
  text-anchor: middle;
  font-family: Inter, sans-serif;
  font-weight: 300;
}
.gl-a {
  font-size: 36px;
  fill: #b8b8b8;
}
.gl-a2 {
  font-size: 30px;
  fill: #b8b8b8;
}
.gl-av {
  font-size: 22px;
  fill: #b8b8b8;
}
.gl-dir {
  font-size: 24px;
  fill: #a9cdea;
}
.gl-n {
  font: 13px Inter, sans-serif;
  fill: #a9cdea;
}
.gl-big {
  font-size: 56px;
  fill: #2a8dd4;
}

/* panes */
.workspace {
  flex: 1;
  display: flex;
  min-height: 0;
}
.panel {
  width: 416px;
  flex: none;
  box-sizing: border-box;
  background: #e8e8e8;
  border-right: 8px solid;
  border-image: linear-gradient(90deg, #f4f4f4 87%, #c9c9c9 87%) 1;
  overflow: hidden;
}
.list-head {
  height: 82px;
  box-sizing: border-box;
  padding: 23px 0 0 12px;
  display: flex;
  align-items: flex-start;
  gap: 12px;
  font-size: 20px;
  line-height: 18px;
  color: #444;
}
.list-head svg {
  margin-top: 4px;
}
.thumb-row {
  display: flex;
  height: 210px;
}
.num-col {
  width: 63px;
  flex: none;
  position: relative;
  padding-top: 1px;
  box-sizing: border-box;
  text-align: center;
  color: #444;
}
.num {
  display: block;
  font: 27px/32px "Liberation Sans", sans-serif;
}
.star {
  display: block;
  margin: 17px 0 0 11px;
}
.thumb {
  width: 306px;
  height: 173px;
  box-sizing: border-box;
  padding: 1.500px;
  border-radius: 9px;
  background: #c9c9c9;
}
.thumb.selected {
  outline: 7px solid #b84a32;
}
.thumb-in {
  height: 100%;
  box-sizing: border-box;
  border: 4px solid #a7b737;
  border-radius: 7px;
  background: #fff;
  overflow: hidden;
}
.thumb-in:has(.mini) {
  border: 0;
}
.tsvg {
  width: 296px;
  height: 161px;
  display: block;
  font-family: "Open Sans", sans-serif;
}
.mini {
  width: 303px;
  height: 170px;
}
.mini .slide {
  transform: scale(0.1578);
  transform-origin: 0 0;
}
.t-title {
  font-size: 12.500px;
  fill: #a7b737;
}
.t-title.tight {
  letter-spacing: -0.4px;
}
.t-node {
  font-size: 6.200px;
  text-anchor: middle;
  fill: #333;
}
.t-note {
  font-size: 6.100px;
  fill: #333;
}
.t-list {
  font-size: 4.700px;
  fill: #a7b737;
}
.t-list.small {
  font-size: 3.800px;
}
.t-bul {
  font-size: 5.700px;
  fill: #a7b737;
}
.t-axis {
  font-size: 3.500px;
  text-anchor: middle;
  fill: #777;
}
.t-ch {
  font-size: 4.800px;
}
.t-ch2 {
  font-size: 6px;
  font-weight: 600;
}
.t-leg {
  font-size: 3px;
  fill: #777;
}
.t-sub {
  font-size: 6.900px;
  font-weight: 700;
  fill: #a7b737;
  letter-spacing: -0.2px;
}
.t-cap {
  font-size: 2.800px;
  fill: #333;
}
.t-th {
  font-size: 5px;
  font-weight: 700;
  fill: #fff;
}
.t-tb {
  font-size: 5.100px;
  font-weight: 700;
  fill: #111;
}
.t-td {
  font-size: 5px;
  font-weight: 600;
  fill: #111;
}
.t-end {
  text-anchor: end;
}
.t-yl {
  font-size: 2.800px;
  text-anchor: end;
  fill: #777;
}
.t-bar {
  font-size: 3px;
  font-weight: 700;
  text-anchor: middle;
  fill: #fff;
}

.stage {
  flex: 1;
  min-width: 0;
  display: flex;
  flex-direction: column;
  background: #ebebeb;
}
.slide-wrap {
  flex: 1;
  display: flex;
  justify-content: center;
  padding-top: 87px;
}
.slide {
  width: 1920px;
  height: 1080px;
  flex: none;
  box-sizing: border-box;
  padding: 37px 36px 36px 35px;
  background: #a7b737;
  box-shadow: 0 0 40px rgba(0, 0, 0, 0.1), 0 0 0 2px #ddd;
}
.no-shadow {
  box-shadow: none;
}
.frame {
  height: 100%;
  box-sizing: border-box;
  background: #fff;
  padding: 3px 3px 2px 0;
  display: flex;
}
.pin-side {
  width: 696px;
  flex: none;
  display: flex;
  align-items: center;
  justify-content: center;
  padding-bottom: 3px;
  box-sizing: border-box;
}
.title-side {
  flex: 1;
  background: #a7b737;
  color: #fff;
  display: flex;
  flex-direction: column;
  align-items: center;
  padding-top: 284px;
  font-family: "Open Sans", sans-serif;
}
.title-side h1 {
  margin: 0;
  font-size: 133px;
  line-height: 148px;
  font-weight: 700;
  text-align: center;
}
.l1 {
  letter-spacing: 4.200px;
}
.l2 {
  letter-spacing: 0.700px;
}
.rule {
  width: 837px;
  height: 2px;
  background: #fff;
  margin-top: 11px;
}
.title-side p {
  margin: 19px 0 0;
  font-size: 41.500px;
  line-height: 54px;
}
.hscroll {
  height: 9px;
  flex: none;
  box-sizing: border-box;
  border-top: 2px solid #ccc;
  background: #f6f6f6;
}

/* status bar */
.status {
  height: 46px;
  flex: none;
  box-sizing: border-box;
  border-top: 2px solid #a5a5a5;
  background: linear-gradient(#e4e4e4, #d7d7d7);
  display: flex;
  align-items: center;
  padding-left: 49px;
  font-size: 24px;
  color: #555;
}
.st-slide {
  width: 166px;
}
.st-lang {
  width: 298px;
  white-space: nowrap;
}
.st-acc {
  margin-right: 6px;
}
.st-a11y {
  width: 914px;
}
.st-notes {
  margin-right: 8px;
}
.st-n {
  width: 106px;
}
.st-cm {
  margin-right: 9px;
}
.st-c {
  width: 141px;
}
.view-on {
  width: 74px;
  height: 100%;
  background: #a6a6a6;
  display: flex;
  align-items: center;
  justify-content: center;
}
.st-grid {
  margin-left: 19px;
}
.st-book {
  margin-left: 42px;
}
.st-show {
  margin-left: 42px;
}
.st-minus {
  margin-left: 35px;
}
.slider {
  width: 200px;
  height: 10px;
  margin-left: 15px;
  border-radius: 5px;
  background: #9b9b9b;
  position: relative;
}
.knob {
  position: absolute;
  left: 83px;
  top: -11px;
  width: 32px;
  height: 32px;
  border-radius: 50%;
  background: #fff;
  box-shadow: 0 1px 2px rgba(0, 0, 0, 0.25);
}
.st-plus {
  margin-left: 13px;
}
.st-zoom {
  margin-left: 34px;
  width: 105px;
}
</style>

<style>
html,
body {
  margin: 0;
  background: #f4f4f4;
}
</style>
